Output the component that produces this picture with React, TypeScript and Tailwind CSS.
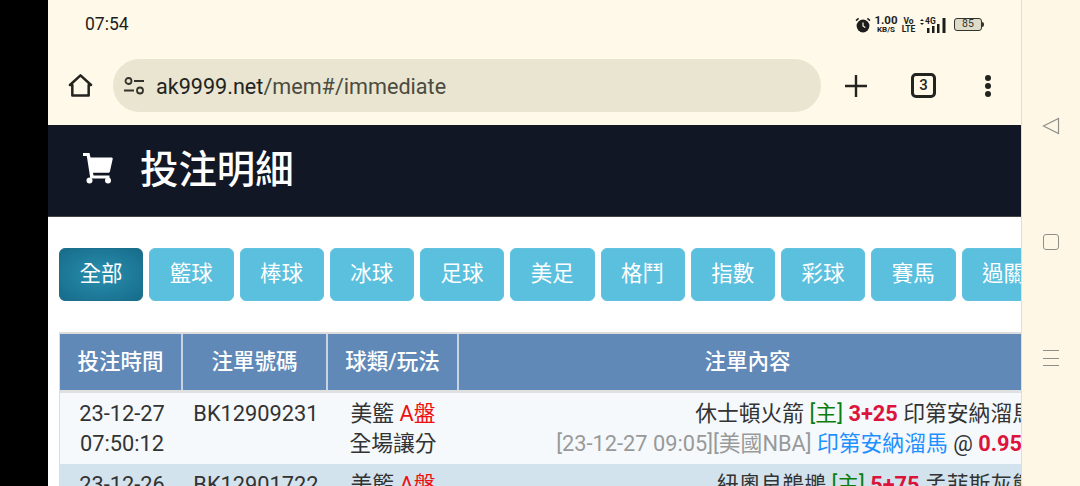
const tabs = ['全部', '籃球', '棒球', '冰球', '足球', '美足', '格鬥', '指數', '彩球', '賽馬', '過關']
const heads = ['投注時間', '注單號碼', '球類/玩法', '注單內容']

function CartIcon() {
  return (
    <svg width="31" height="31" viewBox="0 0 31 31" fill="#fff" className="mr-[28px] mb-[5px]">
      <path d="M1 0h6.500l1 4.500H30l.800 1-3 13.500-1 .800H11l.500 2.700h16v3H9l-.800-.800L4.800 3H1z" />
      <circle cx="7.500" cy="27.500" r="3" />
      <circle cx="26" cy="27.500" r="3" />
    </svg>
  )
}

function StatusIcons() {
  return (
    <div className="flex items-center text-[#1d1d1b]">
      <svg width="16" height="16" viewBox="0 0 16 16" className="mr-[4px]">
        <circle cx="8" cy="9" r="6.400" fill="#1d1d1b" />
        <path d="M1 3.600 3.600 1.400M15 3.600 12.400 1.400" stroke="#1d1d1b" strokeWidth="1.500" />
        <path d="M8 5.500V9l2.300 1.500" stroke="#fef9e8" strokeWidth="1.200" fill="none" />
      </svg>
      <div className="flex flex-col items-center mr-[6px] font-bold w-[22px]">
        <span className="text-[11.500px] leading-[10px]">1.00</span>
        <span className="text-[8px] leading-[9px]">KB/S</span>
      </div>
      <div className="flex flex-col items-center mr-[6px] font-bold text-[8.500px] leading-[8px] w-[11px]">
        <span>Vo</span>
        <span>LTE</span>
      </div>
      <div className="relative w-[27px] h-[16px] mr-[7px]">
        <svg width="27" height="16" viewBox="0 0 27 16" className="absolute left-0 top-0">
          <path d="M0 4 2 2 4 4ZM0 6 2 8 4 6Z" fill="#1d1d1b" />
          <path d="M7 11h2.500v5H7zM12 9h2.500v7H12zM17 7h2.500v9H17zM22.500 1h3v15h-3z" fill="#1d1d1b" />
        </svg>
        <span className="absolute left-[5px] top-0 text-[8.500px] leading-[8px] font-bold">4G</span>
      </div>
      <div className="flex items-center">
        <div className="w-[28px] h-[13px] rounded-[3px] border border-[#33332f] bg-[#dedbc8] flex items-center justify-center text-[10.500px] leading-none text-[#33332f]">
          85
        </div>
        <div className="w-[2px] h-[5px] bg-[#33332f] rounded-r-sm" />
      </div>
    </div>
  )
}

function Toolbar() {
  return (
    <div className="h-[77px] flex items-start pt-[11px]">
      <div className="w-[65px] h-[53px] flex items-center justify-end pr-[20px] shrink-0">
        <svg width="25" height="25" viewBox="0 0 26 26" fill="none" stroke="#23231f" strokeWidth="2.600" strokeLinejoin="round">
          <path d="M2 12.500 13 2.500 24 12.500h-2.500v11h-17v-11Z" />
        </svg>
      </div>
      <div className="w-[708px] h-[53px] rounded-full bg-[#e9e5d0] flex items-center pl-[10px] shrink-0">
        <svg width="23" height="20" viewBox="0 0 23 20" fill="none" stroke="#33332b" strokeWidth="1.800" className="mr-[10px]">
          <circle cx="5.500" cy="5" r="3" />
          <path d="M11 5h10M1 14.500h10" />
          <circle cx="17" cy="14.500" r="3" />
        </svg>
        <span className="text-[21.600px] text-[#4b4b40] pt-[3px]">
          <span className="text-[#23231f]">ak9999.net</span>/mem#/immediate
        </span>
      </div>
      <div className="flex-1 h-[53px] flex items-center">
        <svg width="22" height="22" viewBox="0 0 22 22" stroke="#23231f" strokeWidth="2.400" className="ml-[24px]">
          <path d="M11 0v22M0 11h22" />
        </svg>
        <div className="ml-[44px] w-[25px] h-[25px] rounded-[5px] border-[3px] border-[#23231f] flex items-center justify-center text-[15px] font-medium text-[#23231f]">
          3
        </div>
        <div className="ml-[49px] flex flex-col gap-[2px]">
          <div className="w-[6px] h-[6px] rounded-full bg-[#23231f]" />
          <div className="w-[6px] h-[6px] rounded-full bg-[#23231f]" />
          <div className="w-[6px] h-[6px] rounded-full bg-[#23231f]" />
        </div>
      </div>
    </div>
  )
}

function Row({ striped, time, clock, id, type, play, home, score, away, pick, odds, league }: {
  striped?: boolean
  time: string
  clock: string
  id: string
  type: string
  play: string
  home: string
  score: string
  away: string
  pick: string
  odds: string
  league: string
}) {
  return (
    <div className={`grid grid-cols-[124px_144px_130px_576px] h-[71px] leading-[30px] text-[#333] pt-[6px] ${striped ? 'bg-[#d3e3ee]' : 'bg-[#f5f9fc]'}`}>
      <div className="text-center">
        <div>{time}</div>
        <div>{clock}</div>
      </div>
      <div className="text-center">{id}</div>
      <div className="text-center">
        <div>
          {type} <span className="text-[#f01010]">A盤</span>
        </div>
        <div>{play}</div>
      </div>
      <div className="text-right whitespace-nowrap">
        <div>
          {home} <span className="text-[#0a7d0a]">[主]</span> <b className="text-[#dc143c]">{score}</b> {away}
        </div>
        <div className="mr-[12px]">
          <span className="text-[#999]">{league}</span> <span className="text-[#1e90ff]">{pick}</span> @ <b className="text-[#dc143c]">{odds}</b>
        </div>
      </div>
    </div>
  )
}

export default function App() {
  return (
    <div className="w-[1080px] h-[486px] overflow-hidden flex bg-black font-['Roboto','Noto_Sans_CJK_TC',sans-serif]">
      <div className="w-[48px] shrink-0 bg-black" />

      <div className="w-[973px] shrink-0 overflow-hidden bg-white">
        {/* Browser chrome */}
        <div className="bg-[#fef9e8] h-[125px]">
          <div className="h-[48px] flex items-center justify-between pl-[37px] pr-[37px] pt-[1px]">
            <span className="text-[17.500px] text-[#1d1d1b]">07:54</span>
            <StatusIcons />
          </div>
          <Toolbar />
        </div>

        {/* Page title */}
        <div className="h-[92px] bg-[#121726] flex items-center pl-[34px] text-white border-b border-[#444]">
          <CartIcon />
          <h1 className="text-[38.400px] font-medium leading-none -ml-[1px]">投注明細</h1>
        </div>

        {/* Category filter */}
        <div className="flex gap-[6px] pl-[11px] pt-[31px] w-[1100px]">
          {tabs.map((tab, i) => (
            <button
              key={tab}
              className={`w-[84.250px] h-[53px] shrink-0 rounded-[6px] text-white text-[21.500px] ${
                i === 0
                  ? 'bg-[radial-gradient(ellipse_at_center,#2a8fae,#166b8a)] border border-[#1a6f8c]'
                  : 'bg-[#5bc0de] border border-[#60c2df]'
              }`}
            >
              {tab}
            </button>
          ))}
        </div>

        {/* Bets table */}
        <div className="ml-[11px] mt-[31px] w-[1000px] border-l border-t-2 border-[#dcdcdc] text-[21.800px]">
          <div className="grid grid-cols-[123px_145px_131px_577px] h-[56px] border-b-[3px] border-[#e0e0e0] box-content bg-[#6089b8] text-white font-medium text-[21.500px]">
            {heads.map((head, i) => (
              <div key={head} className={`flex items-center justify-center ${i < 3 ? 'border-r-2 border-[#c5d3e3]' : ''}`}>
                {head}
              </div>
            ))}
          </div>
          <Row
            time="23-12-27"
            clock="07:50:12"
            id="BK12909231"
            type="美籃"
            play="全場讓分"
            home="休士頓火箭"
            score="3+25"
            away="印第安納溜馬"
            league="[23-12-27 09:05][美國NBA]"
            pick="印第安納溜馬"
            odds="0.95"
          />
          <Row
            striped
            time="23-12-26"
            clock="20:11:48"
            id="BK12901722"
            type="美籃"
            play="全場讓分"
            home="紐奧良鵜鶘"
            score="5+75"
            away="孟菲斯灰熊"
            league="[23-12-27 09:05][美國NBA]"
            pick="紐奧良鵜鶘"
            odds="0.95"
          />
        </div>
      </div>

      {/* Android nav bar */}
      <div className="flex-1 bg-[#fef7e6] border-l border-[#e2dfd0] flex flex-col items-center text-[#8f8f8a]">
        <svg width="18" height="18" viewBox="0 0 18 18" fill="none" stroke="currentColor" strokeWidth="1.200" className="mt-[117px]">
          <path d="M16.500 1.500v15L1.500 9Z" />
        </svg>
        <div className="mt-[99px] w-[16px] h-[16px] rounded-[3px] border-[1.500px] border-[#8f8f8a]" />
        <div className="mt-[100px] w-[16px] h-[16px] flex flex-col justify-between">
          <div className="h-px bg-[#8f8f8a]" />
          <div className="h-px bg-[#8f8f8a]" />
          <div className="h-px bg-[#8f8f8a]" />
        </div>
      </div>
    </div>
  )
}
